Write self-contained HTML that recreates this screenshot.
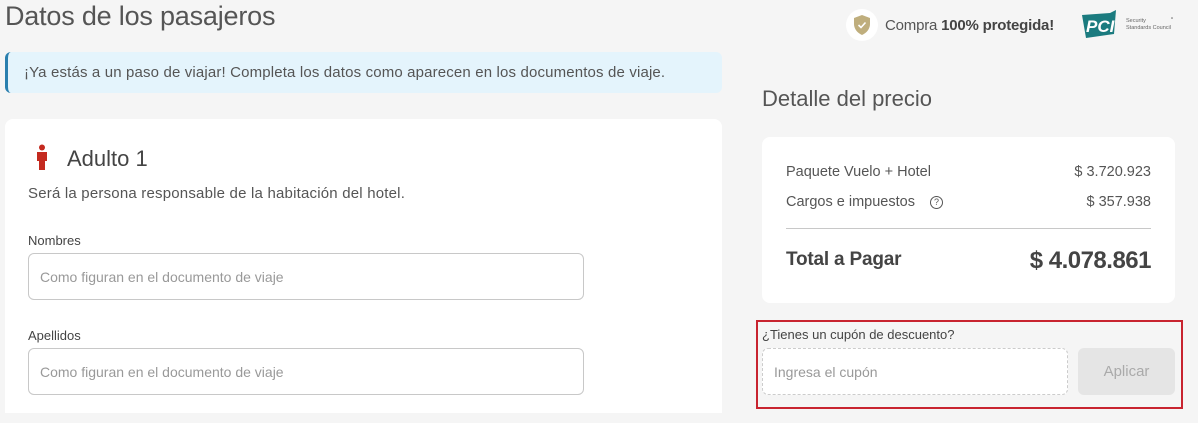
<!DOCTYPE html>
<html><head><meta charset="utf-8"><style>
*{box-sizing:border-box;margin:0;padding:0}
body{width:1198px;height:423px;overflow:hidden;background:#f5f5f5;font-family:"Liberation Sans",sans-serif;color:#444;position:relative}
.a{position:absolute;white-space:nowrap}
.inp{position:absolute;background:#fff;border:1px solid #c8c8c8;border-radius:6px;color:#999;font-size:14px;padding-left:11px;display:flex;align-items:center}
</style></head><body>
<div class="a" style="left:5px;top:1px;font-size:27px;color:#555;letter-spacing:-0.2px">Datos de los pasajeros</div>

<div class="a" style="left:846px;top:9px;width:32px;height:32px;border-radius:50%;background:#fff"></div>
<svg class="a" style="left:853px;top:14px" width="18" height="22" viewBox="0 0 18 22"><path d="M9 1L17 4V10C17 15 13.5 19 9 21C4.5 19 1 15 1 10V4Z" fill="#bfae7d"/><path d="M5.5 11L8 13.5L12.5 8.5" stroke="#fff" stroke-width="1.6" fill="none"/></svg>
<div class="a" style="left:885px;top:17px;font-size:15px;color:#555;letter-spacing:-0.2px">Compra <b style="color:#444">100% protegida!</b></div>
<svg class="a" style="left:1080px;top:10px" width="96" height="30" viewBox="0 0 96 30"><path d="M2 5L30 3L36 0L34 24L6 28Z" fill="#1b7b7f"/><text x="6" y="22" font-family="Liberation Sans" font-weight="bold" font-style="italic" font-size="17" fill="#fff">PCI</text><text x="46" y="12" font-size="5.5" fill="#666" font-family="Liberation Sans">Security</text><text x="46" y="19" font-size="5.5" fill="#666" font-family="Liberation Sans">Standards Council</text><circle cx="92" cy="8" r="0.8" fill="#666"/></svg>

<div class="a" style="left:5px;top:52px;width:717px;height:41px;background:#e4f4fc;border-radius:6px;border-left:3px solid #2a7fae"></div>
<div class="a" style="left:24px;top:64px;font-size:15px;color:#555;letter-spacing:0.15px">¡Ya estás a un paso de viajar! Completa los datos como aparecen en los documentos de viaje.</div>

<div class="a" style="left:5px;top:119px;width:717px;height:294px;background:#fff;border-radius:8px 8px 0 0"></div>
<svg class="a" style="left:35px;top:144px" width="14" height="27" viewBox="0 0 14 27"><circle cx="7" cy="3.5" r="3" fill="#c42a1f"/><path d="M2 8H12V17H10V26H4V17H2Z" fill="#c42a1f"/></svg>
<div class="a" style="left:67px;top:146px;font-size:22px;color:#444">Adulto 1</div>
<div class="a" style="left:28px;top:185px;font-size:15px;color:#555;letter-spacing:0.2px">Será la persona responsable de la habitación del hotel.</div>
<div class="a" style="left:28px;top:233px;font-size:13px;color:#444">Nombres</div>
<div class="inp" style="left:28px;top:253px;width:556px;height:47px">Como figuran en el documento de viaje</div>
<div class="a" style="left:28px;top:328px;font-size:13px;color:#444">Apellidos</div>
<div class="inp" style="left:28px;top:348px;width:556px;height:47px">Como figuran en el documento de viaje</div>

<div class="a" style="left:762px;top:86px;font-size:22px;color:#555">Detalle del precio</div>
<div class="a" style="left:762px;top:137px;width:413px;height:166px;background:#fff;border-radius:8px"></div>
<div class="a" style="left:786px;top:164px;font-size:14.5px;color:#555">Paquete Vuelo + Hotel</div>
<div class="a" style="right:47px;top:164px;font-size:14.5px;color:#555">$ 3.720.923</div>
<div class="a" style="left:786px;top:194px;font-size:14.5px;color:#555">Cargos e impuestos</div>
<div class="a" style="left:930px;top:196px;width:13px;height:13px;border:1.2px solid #555;border-radius:50%;font-size:9px;text-align:center;line-height:11px;color:#555">?</div>
<div class="a" style="right:47px;top:194px;font-size:14.5px;color:#555">$ 357.938</div>
<div class="a" style="left:786px;top:228px;width:365px;height:1px;background:#c8c8c8"></div>
<div class="a" style="left:786px;top:249px;font-size:19px;font-weight:bold;color:#444;letter-spacing:-0.2px">Total a Pagar</div>
<div class="a" style="right:47px;top:247px;font-size:24px;font-weight:bold;color:#444;letter-spacing:-0.5px">$ 4.078.861</div>

<div class="a" style="left:756px;top:320px;width:427px;height:89px;border:2px solid #c8242f"></div>
<div class="a" style="left:762px;top:327px;font-size:13px;color:#444">¿Tienes un cupón de descuento?</div>
<div class="inp" style="left:762px;top:348px;width:306px;height:47px;border:1px dashed #ccc">Ingresa el cupón</div>
<div class="a" style="left:1078px;top:348px;width:97px;height:47px;background:#e5e5e5;border-radius:6px;color:#aaa;font-size:15px;text-align:center;line-height:47px">Aplicar</div>
</body></html>
